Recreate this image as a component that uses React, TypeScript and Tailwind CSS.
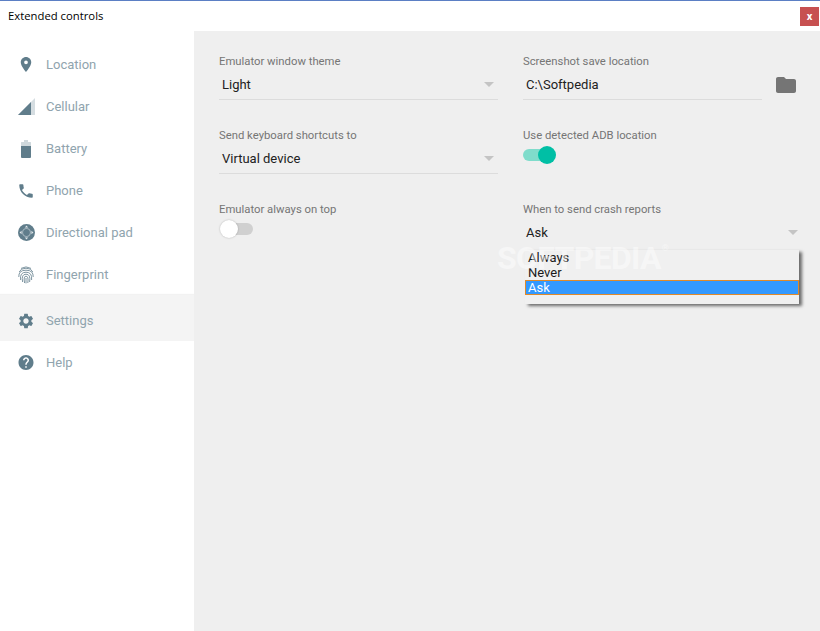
import { MdFolder, MdHelp, MdLocalPhone, MdPlace, MdSettings } from "react-icons/md";

const CellularIcon = () => (
  <svg viewBox="0 0 17 17" className="w-[17px] h-[17px]">
    <path d="M0 17 L17 0 V17 Z" fill="#d5dde1" />
    <path d="M0 17 L13 4 V17 Z" fill="#607d8b" />
  </svg>
);

const BatteryIcon = () => (
  <svg viewBox="0 0 10 18" className="w-[10px] h-[18px]">
    <path d="M3 0 H7 V2 H9.5 Q10 2 10 2.5 V6 H0 V2.5 Q0 2 0.5 2 H3 Z" fill="#cfd8dc" />
    <path d="M0 6 H10 V17 Q10 18 9 18 H1 Q0 18 0 17 Z" fill="#607d8b" />
  </svg>
);

const DpadIcon = () => (
  <svg viewBox="0 0 18 18" className="w-[17px] h-[17px]">
    <circle cx="9" cy="9" r="9" fill="#607d8b" />
    <circle cx="9" cy="9" r="4.2" fill="none" stroke="#9fb1ba" strokeWidth="1.2" />
    <path d="M9 1.6 L10.8 3.8 H7.2 Z M9 16.4 L7.2 14.2 H10.8 Z M1.6 9 L3.8 7.2 V10.8 Z M16.4 9 L14.2 10.8 V7.2 Z" fill="#dfe6e9" />
  </svg>
);

const FingerprintIcon = () => (
  <svg viewBox="0 0 16 18" className="w-[16px] h-[18px]" fill="none" stroke="#7f96a2" strokeWidth="1">
    <path d="M3 2.4 Q8 -0.6 13 2.4" />
    <path d="M1.2 6 Q2.6 2.2 8 2.2 Q13.4 2.2 14.8 6" />
    <path d="M0.8 11 Q0.4 4.2 8 4.2 Q15.6 4.2 15.2 11" />
    <path d="M2.6 14 Q1.6 6.2 8 6.2 Q14.4 6.2 13.6 14" />
    <path d="M4.6 16 Q3 8.2 8 8.2 Q13 8.2 11.6 16" />
    <path d="M6.6 17 Q5.2 10.2 8 10.2 Q10.8 10.2 9.8 17" />
    <path d="M8 12 V17.4" />
  </svg>
);

const navItems = [
  { label: "Location", icon: <MdPlace className="w-[21px] h-[21px]" /> },
  { label: "Cellular", icon: <CellularIcon /> },
  { label: "Battery", icon: <BatteryIcon /> },
  { label: "Phone", icon: <MdLocalPhone className="w-[22px] h-[22px]" /> },
  { label: "Directional pad", icon: <DpadIcon /> },
  { label: "Fingerprint", icon: <FingerprintIcon /> },
  { label: "Settings", icon: <MdSettings className="w-[22px] h-[22px]" />, active: true },
  { label: "Help", icon: <MdHelp className="w-[21px] h-[21px]" /> },
];

function Label({ children }: { children: string }) {
  return <div className="h-[18px] leading-[20px] text-[11.3px] text-[#757575]">{children}</div>;
}

function SelectField({ value, line = true }: { value: string; line?: boolean }) {
  return (
    <div className={`h-[30px] flex items-center justify-between px-[3px] border-b ${line ? "border-[#dcdcdc]" : "border-transparent"}`}>
      <span className="text-[13px] text-[#212121]">{value}</span>
      <span className="w-0 h-0 mr-[1px] border-x-[5px] border-x-transparent border-t-[5px] border-t-[#c4c4c4]" />
    </div>
  );
}

function Toggle({ on }: { on: boolean }) {
  return (
    <div className="h-[20px] pt-[1px] flex items-center">
      <div className={`relative w-[30px] h-[12px] rounded-full ${on ? "bg-[#7fdccb]" : "ml-[4px] bg-[#d0d0d0]"}`}>
        <div
          className={`absolute top-[-3px] w-[18px] h-[18px] rounded-full ${
            on ? "right-[-3px] bg-[#00bfa5]" : "left-[-3px] bg-white shadow-[0_0_2px_rgba(0,0,0,0.25)]"
          }`}
        />
      </div>
    </div>
  );
}

export default function App() {
  return (
    <div className="relative w-[820px] h-[631px] overflow-hidden bg-white border-t border-[#5b7fc4] font-['Roboto',sans-serif]">
      <div className="h-[30px] flex items-center justify-between pl-2 pr-[1px]">
        <span className="text-[11.3px] text-black font-['Open_Sans','Noto_Sans',sans-serif]">Extended controls</span>
        <div className="w-[19px] h-[19px] mt-[1px] bg-[#c75050] flex items-center justify-center text-white text-[11px] font-bold leading-none">
          x
        </div>
      </div>

      <div className="flex h-[600px]">
        <aside className="w-[194px] pt-[12px]">
          {navItems.map((item) => (
            <div
              key={item.label}
              className={`flex items-center ${
                item.active ? "h-[46px] pt-[5px] bg-[#f4f4f4] shadow-[0_-1px_1px_rgba(0,0,0,0.05)]" : "h-[42px] pt-[1px]"
              }`}
            >
              <div className="w-[18px] ml-[17px] flex justify-center text-[#607d8b]">{item.icon}</div>
              <span className="ml-[11px] text-[13px] text-[#90a4ae]">{item.label}</span>
            </div>
          ))}
        </aside>

        <main className="flex-1 bg-[#efefef] pt-[21px] pl-[25px] grid grid-cols-[304px_1fr] auto-rows-[74px]">
          <div className="w-[279px]">
            <Label>Emulator window theme</Label>
            <SelectField value="Light" />
          </div>
          <div className="w-[279px]">
            <Label>Screenshot save location</Label>
            <div className="flex items-center">
              <div className="w-[239px] h-[30px] flex items-center pl-[3px] border-b border-[#dcdcdc] text-[13px] text-[#212121]">
                C:\Softpedia
              </div>
              <MdFolder className="w-[24px] h-[24px] ml-[12px] text-[#757575]" />
            </div>
          </div>
          <div className="w-[279px]">
            <Label>Send keyboard shortcuts to</Label>
            <SelectField value="Virtual device" />
          </div>
          <div>
            <Label>Use detected ADB location</Label>
            <Toggle on />
          </div>
          <div className="w-[279px]">
            <Label>Emulator always on top</Label>
            <Toggle on={false} />
          </div>
          <div className="relative w-[279px]">
            <Label>When to send crash reports</Label>
            <SelectField value="Ask" line={false} />
            <div className="absolute z-10 left-[2px] top-[50px] w-[274px] h-[54px] bg-[#f0f0f0] shadow-[3px_2px_3px_rgba(0,0,0,0.55)] text-[13px] leading-[15px] text-[#1a1a1a]">
              <div className="h-[15px] pl-[3px]">Always</div>
              <div className="h-[15px] pl-[3px]">Never</div>
              <div className="h-[15px] pl-[2px] leading-[13px] bg-[#3399ff] text-white border border-[#e08a2a]">Ask</div>
            </div>
          </div>
        </main>
      </div>

      <div className="absolute z-20 left-[497px] top-[238px] text-[32px] leading-[38px] font-bold tracking-[-0.7px] text-white/45 pointer-events-none">
        SOFTPEDIA<sup className="text-[9px] font-normal top-[-18px] ml-[1px]">®</sup>
      </div>
    </div>
  );
}
